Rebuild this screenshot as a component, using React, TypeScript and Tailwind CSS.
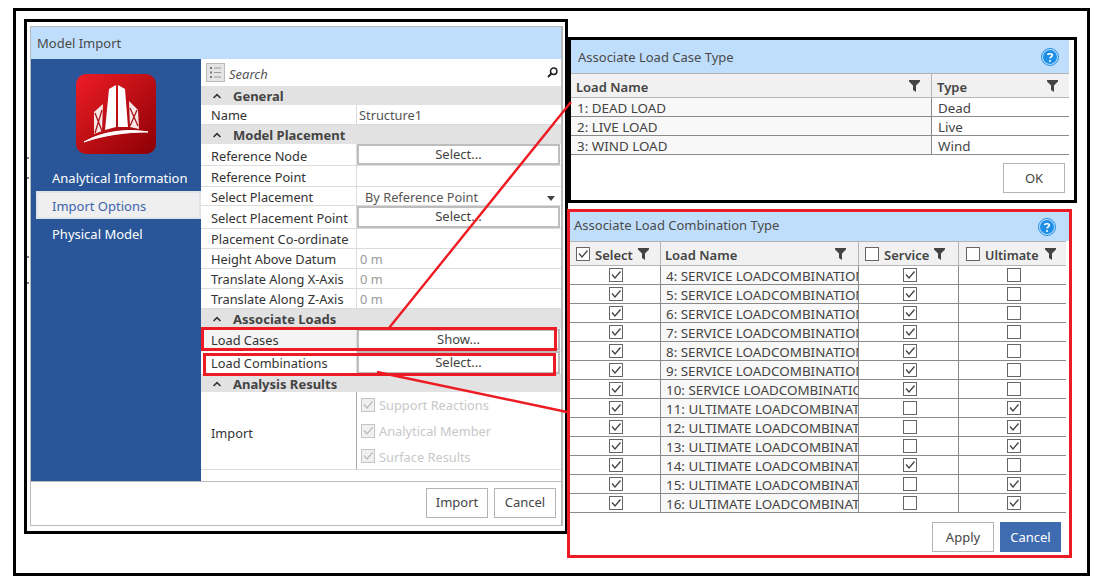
const font = { fontFamily: '"Noto Sans", "Open Sans", sans-serif' }

function Check({ on, faded }: { on?: boolean; faded?: boolean }) {
	return (
		<svg width="14" height="14" viewBox="0 0 14 14" className="shrink-0">
			<rect x="0.5" y="0.5" width="13" height="13" fill={faded ? '#f0f0f0' : '#fff'} stroke={faded ? '#c4c4c4' : '#666'} />
			{on && <path d="M3 6.5 L6 10 L11.5 3.5" fill="none" stroke={faded ? '#bdbdbd' : '#444'} strokeWidth="1.3" />}
		</svg>
	)
}

function Funnel() {
	return (
		<svg width="11" height="12" viewBox="0 0 11 12" className="shrink-0">
			<path d="M0 0 H11 V1.5 L7 5.5 V12 L4 10 V5.5 L0 1.5 Z" fill="#444" />
		</svg>
	)
}

function Help() {
	return (
		<svg width="18" height="18" viewBox="0 0 18 18" className="shrink-0">
			<circle cx="9" cy="9" r="8.5" fill="none" stroke="#1e8fe6" />
			<circle cx="9" cy="9" r="7" fill="#1e8fe6" />
			<path d="M6.6 7 C6.6 5.4 11.4 5.2 11.4 7.3 C11.4 8.8 9 8.8 9 10.5" fill="none" stroke="#fff" strokeWidth="1.6" />
			<circle cx="9" cy="12.9" r="1" fill="#fff" />
		</svg>
	)
}

function Chevron() {
	return (
		<svg width="10" height="6" viewBox="0 0 10 6" className="shrink-0">
			<path d="M1.5 5 L5 1.7 L8.5 5" fill="none" stroke="#333" strokeWidth="1.6" />
		</svg>
	)
}

function Logo() {
	return (
		<svg width="80" height="80" viewBox="0 0 80 80">
			<defs>
				<linearGradient id="logoRed" x1="0" y1="0" x2="1" y2="1">
					<stop offset="0" stopColor="#ee1c25" />
					<stop offset="1" stopColor="#8b0005" />
				</linearGradient>
			</defs>
			<rect width="80" height="80" rx="10" fill="url(#logoRed)" />
			<path d="M29 56 L33 15 L40 11 V53 Z" fill="#fff" />
			<path d="M42 11 L49 15 L52 53 L42 53 Z" fill="#fff" />
			<path d="M18 60 L18 38 L27 30 L26 57 Z" fill="#f6e6e6" />
			<path d="M54 53 L53 27 L62 36 L63 55 Z" fill="#f6e6e6" />
			<path d="M19 39 L26 57 M26 36 L19 59 M54 34 L62 52 M61 36 L54 52" stroke="#a8141a" strokeWidth="1.3" />
			<path d="M8 68 C25 58 50 54 72 58 C50 58 28 61 8 68 Z" fill="#fff" stroke="#fff" strokeWidth="1" />
		</svg>
	)
}

function Section({ title, h }: { title: string; h: string }) {
	return (
		<div className={`flex items-center gap-[9px] bg-[#e2e2e2] pl-[11px] text-[13px] font-bold text-[#444] ${h}`}>
			<Chevron />
			<span className="pt-[2px] pl-[2px]">{title}</span>
		</div>
	)
}

function Row({ label, h, children, tint, low }: { label: string; h: string; children?: React.ReactNode; tint?: boolean; low?: boolean }) {
	return (
		<div className={`flex border-b border-[#dcdcdc] text-[12.8px] text-[#333] ${h} ${tint ? 'bg-[#f4f4f4]' : ''}`}>
			<div className={`flex w-[156px] shrink-0 items-center border-r border-[#dcdcdc] pl-[10px] whitespace-nowrap ${low ? 'pt-[4px]' : 'pt-[2px]'}`}>
				{label}
			</div>
			<div className="flex min-w-0 flex-1 items-center bg-white">{children}</div>
		</div>
	)
}

function SelectBtn({ text = 'Select...' }: { text?: string }) {
	return (
		<div className="mr-[1px] flex h-full flex-1 items-center justify-center border-2 border-[#bdbdbd] bg-white text-[13px] text-[#444]">
			{text}
		</div>
	)
}

function Muted() {
	return <span className="pt-[2px] pl-[3px] text-[#9a9a9a]">0 m</span>
}

function Btn({ text, w, primary }: { text: string; w: string; primary?: boolean }) {
	return (
		<div
			className={`flex h-[30px] items-center justify-center pt-[1px] text-[13px] ${w} ${
				primary ? 'bg-[#3f6cb0] text-white' : 'border border-[#b4b4b4] bg-white text-[#444]'
			}`}
		>
			{text}
		</div>
	)
}

function ModelImport() {
	return (
		<div className="absolute top-[19px] left-[24px] h-[515px] w-[544px] border-[3px] border-black bg-white pt-[4px] pr-[2px] pb-[5px] pl-[3px]">
			<div className="flex h-full flex-col border-t border-r-2 border-b border-l border-[#b9b9b9]">
				<div className="flex h-[32px] shrink-0 items-center bg-[#bfdefc] pt-[2px] pl-[6px] text-[13px] text-[#4a4a4a]">Model Import</div>
				<div className="flex h-[423px] shrink-0 border-b border-[#b9b9b9]">
					<aside className="w-[170px] shrink-0 bg-[#2a5699] text-[13px] text-white">
						<div className="flex justify-center pt-[15px]">
							<Logo />
						</div>
						<div className="mt-[14px] pl-[21px] leading-[20px]">Analytical Information</div>
						<div className="mt-[3px] ml-[5px] flex h-[28px] items-center border-2 border-[#dfe3ea] bg-[#efefef] pt-[4px] pl-[14px] text-[#3a66ad]">
							Import Options
						</div>
						<div className="mt-[5px] pl-[21px] leading-[20px]">Physical Model</div>
					</aside>
					<div className="min-w-0 flex-1">
						<div className="flex h-[27px] items-center gap-[4px] pr-[3px] pl-[5px]">
							<svg width="19" height="19" viewBox="0 0 19 19">
								<rect x="0.5" y="0.5" width="18" height="18" fill="#e4e4e4" stroke="#bbb" />
								<path d="M4 5 H6 M4 9.5 H6 M4 14 H6" stroke="#777" strokeWidth="2" />
								<path d="M8 5 H15 M8 9.5 H15 M8 14 H15" stroke="#999" />
							</svg>
							<span className="flex-1 pt-[4px] text-[13px] text-[#555] italic">Search</span>
							<svg width="11" height="11" viewBox="0 0 11 11">
								<circle cx="6.7" cy="4.2" r="3.2" fill="none" stroke="#222" strokeWidth="1.5" />
								<path d="M4.5 6.5 L1 10" stroke="#222" strokeWidth="2" />
							</svg>
						</div>
						<Section title="General" h="h-[19px]" />
						<Row label="Name" h="h-[20px]">
							<span className="pt-[2px] pl-[2px] text-[#555]">Structure1</span>
						</Row>
						<Section title="Model Placement" h="h-[19px]" />
						<Row label="Reference Node" h="h-[22px]" low>
							<SelectBtn />
						</Row>
						<Row label="Reference Point" h="h-[21px]" low />
						<Row label="Select Placement" h="h-[19px]" low>
							<div className="flex flex-1 items-center justify-between pt-[4px] pr-[6px] pl-[8px] text-[#555]">
								<span>By Reference Point</span>
								<svg width="8" height="5" viewBox="0 0 8 5">
									<path d="M0 0 H8 L4 5 Z" fill="#444" />
								</svg>
							</div>
						</Row>
						<Row label="Select Placement Point" h="h-[23px]" low>
							<SelectBtn />
						</Row>
						<Row label="Placement Co-ordinate" h="h-[20px]" />
						<Row label="Height Above Datum" h="h-[20px]">
							<Muted />
						</Row>
						<Row label="Translate Along X-Axis" h="h-[20px]">
							<Muted />
						</Row>
						<Row label="Translate Along Z-Axis" h="h-[20px]">
							<Muted />
						</Row>
						<Section title="Associate Loads" h="h-[20px]" />
						<Row label="Load Cases" h="h-[22px]" tint>
							<SelectBtn text="Show..." />
						</Row>
						<Row label="Load Combinations" h="h-[24px]">
							<SelectBtn />
						</Row>
						<Section title="Analysis Results" h="h-[17px]" />
						<div className="flex h-[78px] border-b border-[#dcdcdc] text-[12.8px] text-[#333]">
							<div className="flex w-[156px] shrink-0 items-center border-r border-[#aaa] pt-[7px] pl-[10px]">Import</div>
							<div className="flex flex-1 flex-col pl-[4px] text-[#c8c8c8]">
								{['Support Reactions', 'Analytical Member', 'Surface Results'].map((t) => (
									<div key={t} className="flex h-[26px] items-center gap-[4px]">
										<Check on faded />
										<span className="pt-[2px]">{t}</span>
									</div>
								))}
							</div>
						</div>
					</div>
				</div>
				<div className="flex flex-1 items-center justify-end gap-[6px] pr-[5px] pb-[2px]">
					<Btn text="Import" w="w-[62px]" />
					<Btn text="Cancel" w="w-[62px]" />
				</div>
			</div>
		</div>
	)
}

const cases = [
	['1: DEAD LOAD', 'Dead'],
	['2: LIVE LOAD', 'Live'],
	['3: WIND LOAD', 'Wind'],
]

function LoadCases() {
	return (
		<div className="absolute top-[37px] left-[568px] h-[166px] w-[509px] border-[3px] border-black bg-white pr-[5px]">
			<div className="flex h-[33px] items-center justify-between bg-[#bfdefc] pr-[10px] pl-[7px] text-[13px] text-[#4a4a4a]">
				<span className="pt-[3px]">Associate Load Case Type</span>
				<Help />
			</div>
			<div className="flex h-[25px] border-y border-[#b4b4b4] bg-[#f1f1f1] text-[13px] font-semibold text-[#444]">
				<div className="flex w-[361px] items-center justify-between border-r border-[#b4b4b4] pr-[11px] pl-[5px]">
					<span className="pt-[5px]">Load Name</span>
					<Funnel />
				</div>
				<div className="flex flex-1 items-center justify-between pr-[11px] pl-[5px]">
					<span className="pt-[5px]">Type</span>
					<Funnel />
				</div>
			</div>
			{cases.map(([name, type]) => (
				<div key={name} className="flex h-[19px] border-b border-[#8a8a8a] text-[13.4px] text-[#444]">
					<div className="flex w-[361px] items-center border-r border-[#8a8a8a] bg-[#f8f8f8] pt-[3px] pl-[6px]">{name}</div>
					<div className="flex flex-1 items-center pt-[3px] pl-[6px]">{type}</div>
				</div>
			))}
			<div className="flex justify-end pt-[8px] pr-[4px]">
				<Btn text="OK" w="w-[62px]" />
			</div>
		</div>
	)
}

const combos = [
	'4: SERVICE LOADCOMBINATION',
	'5: SERVICE LOADCOMBINATION',
	'6: SERVICE LOADCOMBINATION',
	'7: SERVICE LOADCOMBINATION',
	'8: SERVICE LOADCOMBINATION',
	'9: SERVICE LOADCOMBINATION',
	'10: SERVICE LOADCOMBINATION',
	'11: ULTIMATE LOADCOMBINATION',
	'12: ULTIMATE LOADCOMBINATION',
	'13: ULTIMATE LOADCOMBINATION',
	'14: ULTIMATE LOADCOMBINATION',
	'15: ULTIMATE LOADCOMBINATION',
	'16: ULTIMATE LOADCOMBINATION',
]

function LoadCombos() {
	return (
		<div className="absolute top-[209px] left-[567px] h-[349px] w-[505px] border-[3px] border-[#ed1c24] bg-white">
			<div className="flex h-[29px] items-center justify-between bg-[#bfdefc] pr-[13px] pl-[4px] text-[13px] text-[#4a4a4a]">
				<span className="pb-[2px]">Associate Load Combination Type</span>
				<Help />
			</div>
			<div className="flex h-[25px] w-[496px] border-y border-[#b4b4b4] bg-[#f1f1f1] text-[13px] font-semibold text-[#444]">
				<div className="flex w-[91px] items-center gap-[5px] border-r border-[#b4b4b4] pl-[6px]">
					<Check on />
					<span className="pt-[5px]">Select</span>
					<Funnel />
				</div>
				<div className="flex w-[198px] items-center justify-between border-r border-[#b4b4b4] pr-[12px] pl-[4px]">
					<span className="pt-[5px]">Load Name</span>
					<Funnel />
				</div>
				<div className="flex w-[100px] items-center gap-[5px] border-r border-[#b4b4b4] pl-[6px]">
					<Check />
					<span className="pt-[5px]">Service</span>
					<Funnel />
				</div>
				<div className="flex flex-1 items-center gap-[6px] pl-[7px]">
					<Check />
					<span className="-ml-[1px] pt-[5px] text-[12.6px]">Ultimate</span>
					<Funnel />
				</div>
			</div>
			{combos.map((name, i) => {
				const service = i < 7 || i === 10
				return (
					<div key={name} className="flex h-[19px] w-[496px] border-b border-[#8a8a8a] text-[13px] text-[#444]">
						<div className="flex w-[91px] items-center justify-center border-r border-[#8a8a8a] pl-[1px]">
							<Check on />
						</div>
						<div className="w-[198px] overflow-hidden border-r border-[#8a8a8a] bg-[#f8f8f8] pr-[3px] pl-[5px] text-[13.4px] leading-[20px] whitespace-nowrap">
							{name}
						</div>
						<div className="flex w-[100px] items-center justify-center border-r border-[#8a8a8a] pl-[2px]">
							<Check on={service} />
						</div>
						<div className="flex flex-1 items-center justify-center pl-[2px]">
							<Check on={!service} />
						</div>
					</div>
				)
			})}
			<div className="flex justify-end gap-[6px] pt-[9px] pr-[8px]">
				<Btn text="Apply" w="w-[62px]" />
				<Btn text="Cancel" w="w-[61px]" primary />
			</div>
		</div>
	)
}

export default function App() {
	return (
		<div className="relative h-[585px] w-[1098px] overflow-hidden bg-white" style={font}>
			<div className="absolute top-[8px] left-[13px] h-[568px] w-[1077px] border-[3px] border-black" />
			<ModelImport />
			<LoadCases />
			<LoadCombos />
			{/* callout boxes and leader lines drawn over the windows */}
			<div className="absolute top-[327px] left-[201px] h-[24px] w-[356px] border-[3px] border-[#ed1c24]" />
			<div className="absolute top-[353px] left-[203px] h-[23px] w-[353px] border-[3px] border-[#ed1c24]" />
			<svg width="1098" height="585" className="pointer-events-none absolute top-0 left-0">
				<path d="M389 328 L571 102" stroke="#ed1c24" strokeWidth="2.4" />
				<path d="M377 372 L567 412" stroke="#ed1c24" strokeWidth="2.4" />
				<path d="M27 158 H29 M27 178 H29 M27 257 H29 M27 283 H29" stroke="#000" />
			</svg>
		</div>
	)
}
